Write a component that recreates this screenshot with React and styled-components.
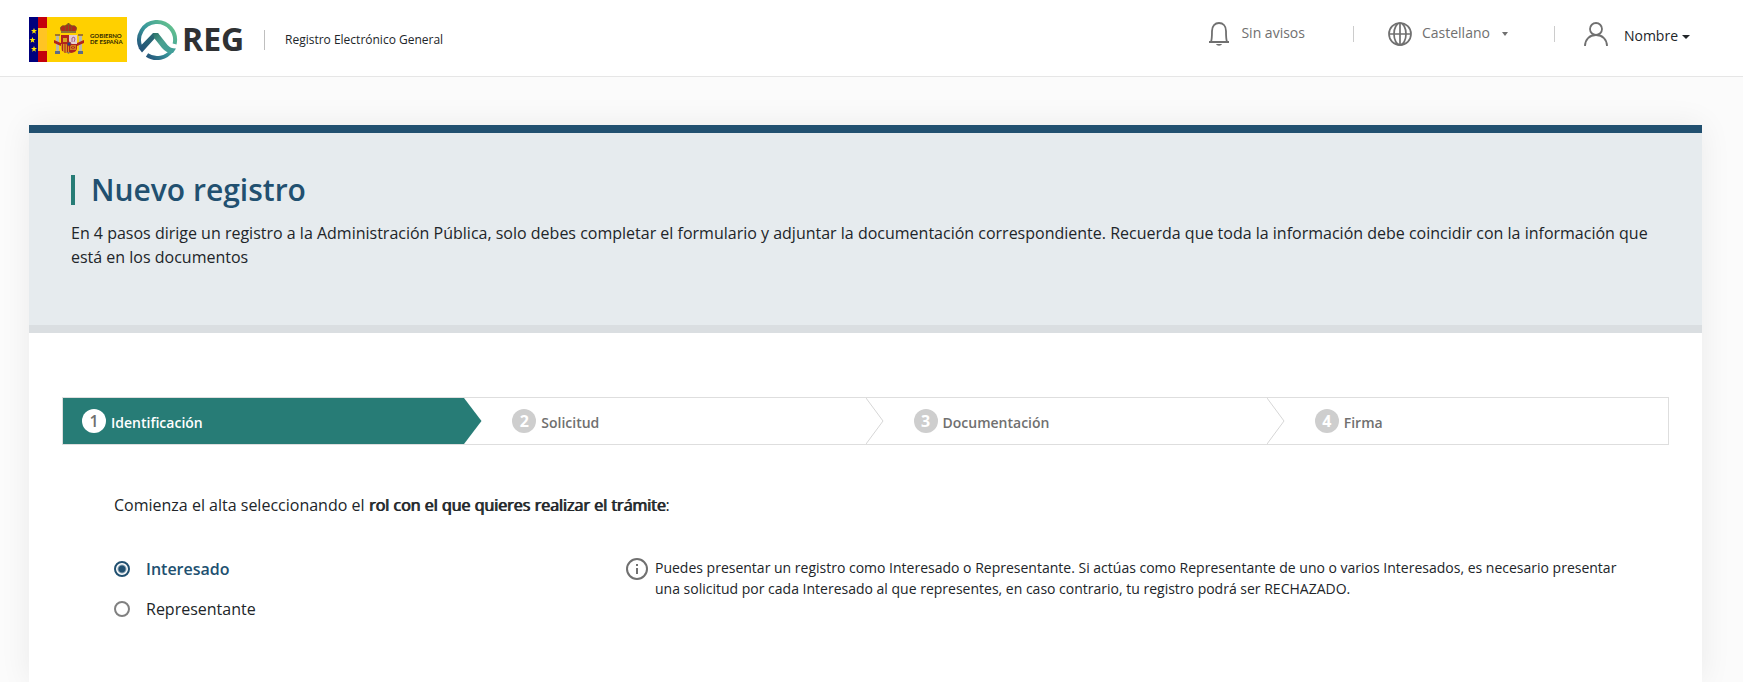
import React, { useState } from "react";
import styled, { createGlobalStyle, css } from "styled-components";

const GlobalStyle = createGlobalStyle`
  *, *::before, *::after {
    box-sizing: border-box;
  }

  body {
    margin: 0;
    background: #fbfbfb;
    color: #212529;
    font-family: "Open Sans", "Noto Sans", sans-serif;
    font-size: 16px;
    line-height: 24px;
  }

  button, input {
    font: inherit;
    color: inherit;
  }
`;

const Header = styled.header`
  display: flex;
  align-items: flex-start;
  justify-content: space-between;
  height: 77px;
  padding: 0 53px 0 29px;
  background: #fff;
  border-bottom: 1px solid #e6e6e6;
`;

const Brand = styled.a`
  display: flex;
  align-items: center;
  height: 77px;
  padding-top: 2px;
  color: #212529;
  text-decoration: none;
`;

const Flag = styled.svg`
  width: 98px;
  height: 45px;
  margin-right: 9px;
`;

const Logo = styled.svg`
  width: 108px;
  height: 43px;
`;

const SiteName = styled.span`
  display: flex;
  align-items: center;
  height: 20px;
  margin-left: 20px;
  padding-left: 20px;
  border-left: 1px solid #bfbfbf;
  font-size: 12px;
`;

const Tools = styled.nav`
  display: flex;
  align-items: center;
  height: 68px;
`;

const Tool = styled.button`
  display: flex;
  align-items: center;
  padding: 0;
  border: 0;
  background: none;
  font-size: 14px;
  color: ${({ $dark }) => ($dark ? "#212529" : "#707070")};
  cursor: pointer;

  svg {
    flex: none;
    margin-right: ${({ $gap }) => $gap}px;
    color: #707070;
  }
`;

const ToolLabel = styled.span`
  padding: ${({ $low }) => ($low ? "4px 0 0" : "0 0 2px")};
`;

const Separator = styled.span`
  width: 1px;
  height: 16px;
  margin: 0 ${({ $after }) => $after}px 0 ${({ $before }) => $before}px;
  background: #ccc;
`;

const Caret = styled.span`
  display: inline-block;
  margin-left: ${({ $space }) => $space}px;
  border-top: 4px solid;
  border-left: ${({ $size }) => $size}px solid transparent;
  border-right: ${({ $size }) => $size}px solid transparent;
  vertical-align: middle;
`;

const Card = styled.main`
  min-height: calc(100vh - 125px);
  margin: 48px 41px 0 29px;
  background: #fff;
  box-shadow: 0 0 30px rgba(0, 0, 0, 0.07);
`;

const Intro = styled.section`
  padding: 42px 41px 56px 42px;
  background: #e6ebee;
  border-top: 8px solid #215070;
  border-bottom: 8px solid #dadee1;
`;

const Title = styled.h1`
  display: flex;
  align-items: center;
  height: 30px;
  margin: 0 0 16px;
  padding-left: 16px;
  border-left: 4px solid #277c76;
  color: #215070;
  font-size: 30px;
  font-weight: 600;
`;

const Lead = styled.p`
  margin: 0;
`;

const Steps = styled.ol`
  display: grid;
  grid-template-columns: repeat(4, 1fr);
  height: 48px;
  margin: 64px 33px 0;
  padding: 0;
  border: 1px solid #dedede;
  list-style: none;
`;

const Step = styled.li`
  position: relative;
  display: flex;
  align-items: center;
  gap: 5px;
  padding-left: 48px;
  color: #707070;
  font-size: 14px;
  font-weight: 600;

  ${({ $active }) =>
    $active &&
    css`
      padding-left: 19px;
      background: #277c76;
      color: #fff;
    `}
`;

const StepNumber = styled.span`
  display: flex;
  align-items: center;
  justify-content: center;
  width: 24px;
  height: 24px;
  border-radius: 50%;
  background: ${({ $active }) => ($active ? "#fff" : "#cecece")};
  color: ${({ $active }) => ($active ? "#707070" : "#fff")};
  font-size: 16px;
  font-weight: ${({ $active }) => ($active ? 600 : 700)};
`;

const StepLabel = styled.span`
  padding-top: 3px;
`;

const StepArrow = styled.svg`
  position: absolute;
  z-index: 1;
  top: 0;
  left: 100%;
  width: 18px;
  height: 100%;
`;

const Form = styled.form`
  padding: 48px 85px 40px;
`;

const Question = styled.p`
  margin: 0 0 40px;
`;

// heavier text that keeps the regular letter widths
const Strong = styled.strong`
  font-weight: 400;
  text-shadow: 1px 0 0 currentColor;
`;

const Row = styled.div`
  display: grid;
  grid-template-columns: 511fr 992fr;
`;

const Roles = styled.fieldset`
  display: flex;
  flex-direction: column;
  align-items: flex-start;
  gap: 16px;
  margin: 0;
  padding: 0;
  border: 0;
`;

const Role = styled.label`
  display: flex;
  align-items: center;
  gap: 16px;
  color: ${({ $checked }) => ($checked ? "#215070" : "#212529")};
  font-weight: ${({ $checked }) => ($checked ? 600 : 400)};
  cursor: pointer;
`;

const Radio = styled.input`
  appearance: none;
  width: 16px;
  height: 16px;
  margin: 0;
  border: 2px solid #808080;
  border-radius: 50%;
  background: #fff;

  &:checked {
    border-color: #215070;
    background: radial-gradient(circle, #215070 3px, #fff 5px);
  }
`;

const Info = styled.div`
  display: flex;
  align-items: flex-start;
  gap: 6px;

  svg {
    flex: none;
  }
`;

const InfoText = styled.p`
  margin: 0;
  font-size: 14px;
  line-height: 21px;
`;

const steps = ["Identificación", "Solicitud", "Documentación", "Firma"];
const roles = ["Interesado", "Representante"];

const Star = ({ x, y }) => (
  <path
    transform={`translate(${x} ${y})`}
    fill="#ffe600"
    d="M0-3 .8-.9 3-.9 1.2.5 1.9 2.7 0 1.4-1.9 2.7-1.2.5-3-.9-.8-.9Z"
  />
);

const SpainFlag = () => (
  <Flag viewBox="0 0 98 45" role="img" aria-label="Gobierno de España">
    <path fill="#ffd000" d="M0 0h98v45H0z" />
    <path fill="#00007d" d="M0 0h9v45H0z" />
    <path fill="#c4000c" d="M9 0h9v11H9zM9 34h9v11H9z" />
    <path fill="#ffc424" d="M9 11h9v23H9z" />
    <Star x={5} y={14} />
    <Star x={3.5} y={23} />
    <Star x={5} y={32} />
    {/* crown */}
    <path fill="#b02a1c" d="M33 15c-3-4-1-7 3-6 1-2 6-2 7 0 4-1 6 2 3 6z" />
    <path stroke="#7c5a20" strokeWidth="1" fill="none" d="M33 15c-3-4-1-7 3-6 1-2 6-2 7 0 4-1 6 2 3 6M39.500 6v9M37 9l-1 6M42 9l1 6M38 7h3" />
    <path fill="#8d7433" d="M32 14h15v2H32z" />
    {/* pillars */}
    <path fill="#b9b9a8" d="M27 19h3v15h-3zM50 19h3v15h-3z" />
    <path fill="#a3762b" d="M26 17h5v2h-5zM49 17h5v2h-5z" />
    <path fill="#5d6c86" d="M26 34h5v3h-5zM49 34h5v3h-5z" />
    <path fill="#b3241c" d="M25 23l7 3v3l-7-3zM55 23l-7 3v3l7-3z" />
    {/* shield */}
    <path fill="#b3241c" d="M32 18h8v9h-8z" />
    <path fill="#e4cdd0" d="M40 18h8v9h-8z" />
    <path fill="#d79a1c" d="M32 27h8v9c-5 0-8-2-8-5z" />
    <path fill="#b3241c" d="M40 27h8v4c0 3-3 5-8 5z" />
    <path stroke="#b3241c" d="M33.500 27v7M36 27v9M38.500 27v9" />
    <path fill="#d9a521" d="M34 21h4v4h-4z" />
    <path stroke="#a75f83" fill="none" d="M43 25v-4l2-1 1 2-1 3" />
    <path stroke="#d9a521" fill="none" strokeWidth=".7" d="M41.500 28.500h5v4h-5zM41.500 28.500l5 4M46.500 28.500l-5 4" />
    <circle cx="40" cy="27" r="2" fill="#27407c" stroke="#b3241c" strokeWidth=".7" />
    <path fill="#8f7a55" d="M37 35h5l-2.500 2z" />
    <g fill="#2e2600" fontFamily="Lato, sans-serif" fontSize="6" fontWeight="700">
      <text x="61" y="21">GOBIERNO</text>
      <text x="61" y="27">DE ESPAÑA</text>
    </g>
  </Flag>
);

const RegLogo = () => (
  <Logo viewBox="0 0 108 43" role="img" aria-label="REG">
    <defs>
      <linearGradient id="ring" gradientUnits="userSpaceOnUse" x1="6" y1="36" x2="36" y2="8">
        <stop offset="0" stopColor="#234f78" />
        <stop offset=".5" stopColor="#3a9a9c" />
        <stop offset="1" stopColor="#63c08f" />
      </linearGradient>
      <linearGradient id="peak" x1="0" y1="1" x2="1" y2="0">
        <stop offset="0" stopColor="#234f78" />
        <stop offset="1" stopColor="#2b6f73" />
      </linearGradient>
      <linearGradient id="slope" x1="0" y1="0" x2="1" y2="1">
        <stop offset="0" stopColor="#2b6f66" />
        <stop offset=".4" stopColor="#4aa08f" />
        <stop offset="1" stopColor="#409f9b" />
      </linearGradient>
    </defs>
    <path fill="none" stroke="url(#ring)" strokeWidth="4" d="M4.500 29A18 18 0 1 1 38.600 26" />
    <path fill="none" stroke="url(#ring)" strokeWidth="4" d="M11 37A18 18 0 0 0 36 32" />
    <path fill="url(#peak)" d="M2.500 30 17 15h5l1 4.500-3-.5L6 34.500z" />
    <path fill="url(#slope)" d="M17 15h5l9.500 12c2 2.500 4.500 3.500 8.500 3.500L37 35c-5 0-8.500-2-11-5l-7.500-9.500z" />
    <text x="46" y="33" fill="#2f3133" fontFamily="Open Sans, sans-serif" fontSize="32" fontWeight="700">
      REG
    </text>
  </Logo>
);

const BellIcon = () => (
  <svg width="20" height="24" viewBox="0 0 20 24" fill="none" stroke="currentColor" strokeWidth="1.800">
    <path d="M0 20h20M2 20c1-3 1-7 1-11 0-5 3-8 7-8s7 3 7 8c0 4 0 8 1 11" />
    <path fill="currentColor" stroke="none" d="M7 22h6c-.5 1-1.600 1.700-3 1.700S7.500 23 7 22z" />
  </svg>
);

const GlobeIcon = () => (
  <svg width="24" height="24" viewBox="0 0 24 24" fill="none" stroke="currentColor" strokeWidth="1.700">
    <circle cx="12" cy="12" r="11" />
    <ellipse cx="12" cy="12" rx="6" ry="11" />
    <path d="M12 1v22M1 12h22" />
  </svg>
);

const UserIcon = () => (
  <svg width="24" height="24" viewBox="0 0 24 24" fill="none" stroke="currentColor" strokeWidth="1.800">
    <circle cx="12" cy="7" r="6" />
    <path d="M1 24c0-6.500 4.500-11 11-11s11 4.500 11 11" />
  </svg>
);

const InfoIcon = () => (
  <svg width="24" height="24" viewBox="0 0 24 24" fill="none" stroke="#707070" strokeWidth="2">
    <circle cx="12" cy="12" r="10" />
    <path d="M12 11v6M12 7v2" />
  </svg>
);

const App = () => {
  const [role, setRole] = useState("Interesado");

  return (
    <>
      <GlobalStyle />
      <Header>
        <Brand href="#">
          <SpainFlag />
          <RegLogo />
          <SiteName>Registro Electrónico General</SiteName>
        </Brand>
        <Tools>
          <Tool type="button" $gap={12}>
            <BellIcon />
            <ToolLabel>Sin avisos</ToolLabel>
          </Tool>
          <Separator $before={48} $after={34} />
          <Tool type="button" $gap={10}>
            <GlobeIcon />
            <ToolLabel>Castellano</ToolLabel>
            <Caret $space={12} $size={3} />
          </Tool>
          <Separator $before={46} $after={29} />
          <Tool type="button" $gap={16} $dark>
            <UserIcon />
            <ToolLabel $low>
              Nombre
              <Caret $space={4} $size={4} />
            </ToolLabel>
          </Tool>
        </Tools>
      </Header>

      <Card>
        <Intro>
          <Title>Nuevo registro</Title>
          <Lead>
            En 4 pasos dirige un registro a la Administración Pública, solo debes completar el
            formulario y adjuntar la documentación correspondiente. Recuerda que toda la
            información debe coincidir con la información que está en los documentos
          </Lead>
        </Intro>

        <Steps>
          {steps.map((label, index) => (
            <Step key={label} $active={index === 0}>
              <StepNumber $active={index === 0}>{index + 1}</StepNumber>
              <StepLabel>{label}</StepLabel>
              {index < steps.length - 1 && (
                <StepArrow viewBox="0 0 18 46" preserveAspectRatio="none" aria-hidden="true">
                  {index === 0 ? (
                    <path fill="#277c76" d="M0 0l17.500 23L0 46z" />
                  ) : (
                    <path fill="none" stroke="#d6d6d6" d="M0 0l17 23L0 46" />
                  )}
                </StepArrow>
              )}
            </Step>
          ))}
        </Steps>

        <Form>
          <Question>
            Comienza el alta seleccionando el{" "}
            <Strong>rol con el que quieres realizar el trámite</Strong>:
          </Question>
          <Row>
            <Roles aria-label="Rol">
              {roles.map((name) => (
                <Role key={name} $checked={role === name}>
                  <Radio
                    type="radio"
                    name="role"
                    value={name}
                    checked={role === name}
                    onChange={() => setRole(name)}
                  />
                  {name}
                </Role>
              ))}
            </Roles>
            <Info>
              <InfoIcon />
              <InfoText>
                Puedes presentar un registro como Interesado o Representante. Si actúas como
                Representante de uno o varios Interesados, es necesario presentar una solicitud
                por cada Interesado al que representes, en caso contrario, tu registro podrá ser
                RECHAZADO.
              </InfoText>
            </Info>
          </Row>
        </Form>
      </Card>
    </>
  );
};

export default App;
